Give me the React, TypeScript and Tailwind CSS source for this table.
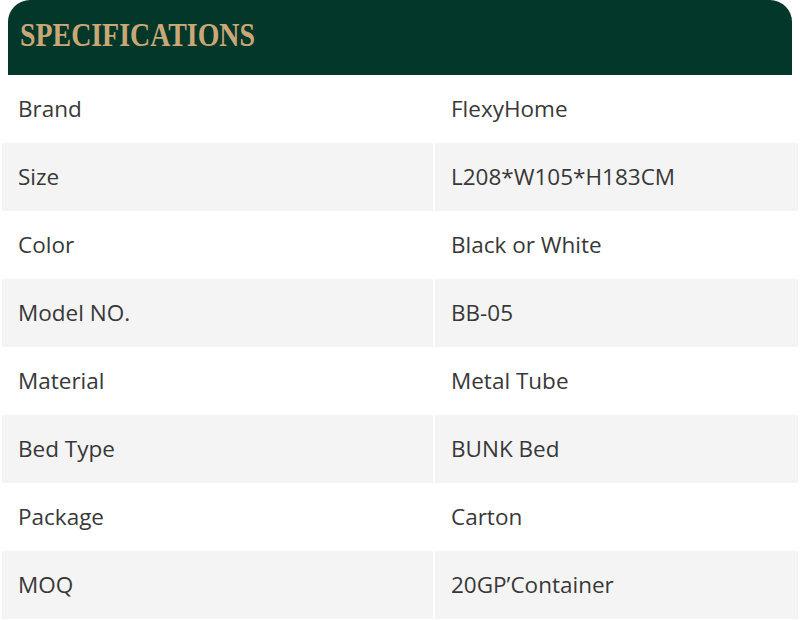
const specs = [
  { label: "Brand", value: "FlexyHome" },
  { label: "Size", value: "L208*W105*H183CM" },
  { label: "Color", value: "Black or White" },
  { label: "Model NO.", value: "BB-05" },
  { label: "Material", value: "Metal Tube" },
  { label: "Bed Type", value: "BUNK Bed" },
  { label: "Package", value: "Carton" },
  { label: "MOQ", value: "20GP’Container" },
];

const App = () => {
  return (
    <div className="w-[800px] h-[620px] bg-white overflow-hidden">
      {/* Header */}
      <div className="mx-2 h-[75px] bg-[#03372a] rounded-t-[22px] flex items-center pl-3 pb-[6px]">
        <h2
          className="text-[34px] font-bold text-[#c9a877] scale-x-[0.82] origin-left whitespace-nowrap"
          style={{ fontFamily: '"Liberation Serif", serif' }}
        >
          SPECIFICATIONS
        </h2>
      </div>

      {/* Rows */}
      <div className="px-[2px]">
        {specs.map((s, i) => (
          <div
            key={s.label}
            className="grid grid-cols-[431px_1fr] gap-[2px] h-[68px] text-[22.5px] text-[#383838]"
            style={{ fontFamily: '"Open Sans", sans-serif' }}
          >
            <div className={`flex items-center pl-4 ${i % 2 ? "bg-[#f4f4f4]" : "bg-white"}`}>{s.label}</div>
            <div className={`flex items-center pl-4 ${i % 2 ? "bg-[#f4f4f4]" : "bg-white"}`}>{s.value}</div>
          </div>
        ))}
      </div>
    </div>
  );
};

export default App;
